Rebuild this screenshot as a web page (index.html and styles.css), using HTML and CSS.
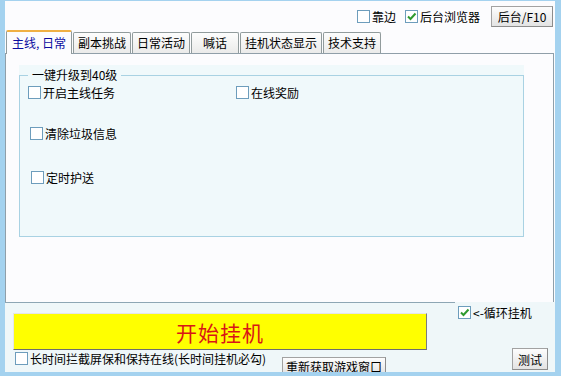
FILE: index.html
```html
<html>
	<head>
		<meta charset="UTF-8">
		<title>挂机</title>
		<link rel="stylesheet" href="styles.css">
	</head>
	<body>
		<div class="window">
			<div class="topbar">
				<label class="check"><span class="box"></span>靠边</label>
				<label class="check browser"><span class="box"><svg viewBox="0 0 11 11" width="11" height="11"><path d="M2 5.5 L4.5 8 L9.5 2.5" fill="none" stroke="#2e9a2e" stroke-width="2"/></svg></span>后台浏览器</label>
				<button class="btn f10">后台/F10</button>
			</div>
			<div class="tabs">
				<span class="tab active">主线, 日常</span>
				<span class="tab">副本挑战</span>
				<span class="tab">日常活动</span>
				<span class="tab">喊话</span>
				<span class="tab">挂机状态显示</span>
				<span class="tab">技术支持</span>
			</div>
			<div class="panel">
				<div class="group">
					<fieldset>
						<legend>一键升级到40级</legend>
						<div class="row first">
							<label class="check col"><span class="box"></span>开启主线任务</label>
							<label class="check"><span class="box"></span>在线奖励</label>
						</div>
						<div class="row second">
							<label class="check"><span class="box"></span>清除垃圾信息</label>
						</div>
						<div class="row third">
							<label class="check"><span class="box"></span>定时护送</label>
						</div>
					</fieldset>
				</div>
			</div>
			<div class="bottom">
				<div class="left">
					<button class="start">开始挂机</button>
					<div class="hold">
						<label class="check"><span class="box"></span>长时间拦截屏保和保持在线(长时间挂机必勾)</label>
						<button class="btn refresh">重新获取游戏窗口</button>
					</div>
				</div>
				<div class="right">
					<label class="check loop"><span class="box"><svg viewBox="0 0 11 11" width="11" height="11"><path d="M2 5.5 L4.5 8 L9.5 2.5" fill="none" stroke="#2e9a2e" stroke-width="2"/></svg></span>&lt;-循环挂机</label>
					<button class="btn test">测试</button>
				</div>
			</div>
		</div>
	</body>
</html>
```
FILE: styles.css
```css
*{
	box-sizing: border-box;
}
body{
	margin: 0;
	font-family: "Noto Sans CJK SC", "Liberation Sans", sans-serif;
	font-size: 12px;
	color: #000;
}
.window{
	width: 561px;
	height: 376px;
	border-style: solid;
	border-color: #a4d2ef;
	border-width: 1px 6px 4px 5px;
	background: #fcfcfe;
	display: flex;
	flex-direction: column;
	overflow: hidden;
}

/* checkboxes */
.check{
	display: flex;
	align-items: center;
	height: 13px;
	line-height: 13px;
	white-space: nowrap;
}
.check .box{
	display: inline-flex;
	align-items: center;
	justify-content: center;
	width: 13px;
	height: 13px;
	border: 1px solid #6d9dbc;
	background: #fff;
	margin-right: 2px;
}

/* buttons */
.btn{
	font-family: inherit;
	font-size: 12px;
	color: #000;
	padding: 0;
	border: 1px solid #a2a2a2;
	border-right-color: #8c8c8c;
	border-bottom-color: #8c8c8c;
	background: linear-gradient(#fdfdfd, #e3e3e3);
}

/* top bar */
.topbar{
	flex: none;
	height: 29px;
	display: flex;
	justify-content: flex-end;
	align-items: flex-start;
	padding: 5px 2px 0 0;
}
.topbar .check{
	margin-top: 4px;
}
.topbar .browser{
	margin-left: 9px;
}
.f10{
	width: 62px;
	height: 21px;
	margin-left: 11px;
}

/* tabs */
.tabs{
	flex: none;
	height: 23px;
	display: flex;
	align-items: flex-end;
	padding-left: 1px;
	position: relative;
	z-index: 1;
}
.tab{
	height: 21px;
	line-height: 20px;
	min-width: 48px;
	padding: 0 4px;
	margin-right: 1px;
	text-align: center;
	border: 1px solid #919b9c;
	border-bottom: none;
	border-radius: 2px 2px 0 0;
	background: linear-gradient(#fdfdfd, #ebebea);
}
.tab.active{
	height: 24px;
	margin-bottom: -1px;
	padding: 0 5px;
	line-height: 21px;
	border-top: 2px solid #f0b043;
	background: #fcfcfe;
	color: #0c0ca0;
}

/* tab page */
.panel{
	flex: none;
	height: 249px;
	margin-right: 1px;
	border: 1px solid #909fa9;
	border-bottom: none;
	padding: 11px 0 0 13px;
}
.group{
	width: 505px;
	height: 172px;
	background: #f0f9fb;
	padding-top: 3px;
}
fieldset{
	margin: 0;
	padding: 4px 0 0 0;
	height: 169px;
	min-width: 0;
	border: 1px solid #a9d2e3;
}
legend{
	margin-left: 8px;
	padding: 0 4px;
	line-height: 14px;
}
.row{
	display: flex;
}
.row .col{
	width: 208px;
}
.row.first{
	padding-left: 8px;
}
.row.second{
	margin-top: 28px;
	padding-left: 10px;
}
.row.third{
	margin-top: 31px;
	padding-left: 11px;
}

/* bottom area */
.bottom{
	flex: none;
	height: 70px;
	display: flex;
	background: #eff7f9;
	overflow: hidden;
}
.left{
	width: 450px;
	border-top: 1px solid #8da6b4;
	padding-left: 8px;
}
.start{
	display: block;
	margin-top: 10px;
	width: 414px;
	height: 37px;
	padding: 0;
	border: 1px solid;
	border-color: #e6e6e6 #7c7c7c #6e6e6e #e6e6e6;
	background: #ffff00;
	color: #d91616;
	font-family: "Noto Sans CJK SC", sans-serif;
	font-size: 21px;
	letter-spacing: 1px;
}
.hold{
	display: flex;
	align-items: flex-start;
	padding-left: 2px;
	margin-top: 2px;
}
.refresh{
	margin: 5px 0 0 16px;
	width: 104px;
	height: 18px;
	line-height: 15px;
}
.right{
	flex: 1;
	display: flex;
	flex-direction: column;
	padding: 4px 7px 2px 3px;
}
.test{
	margin-top: auto;
	align-self: flex-end;
	width: 36px;
	height: 22px;
}
```
